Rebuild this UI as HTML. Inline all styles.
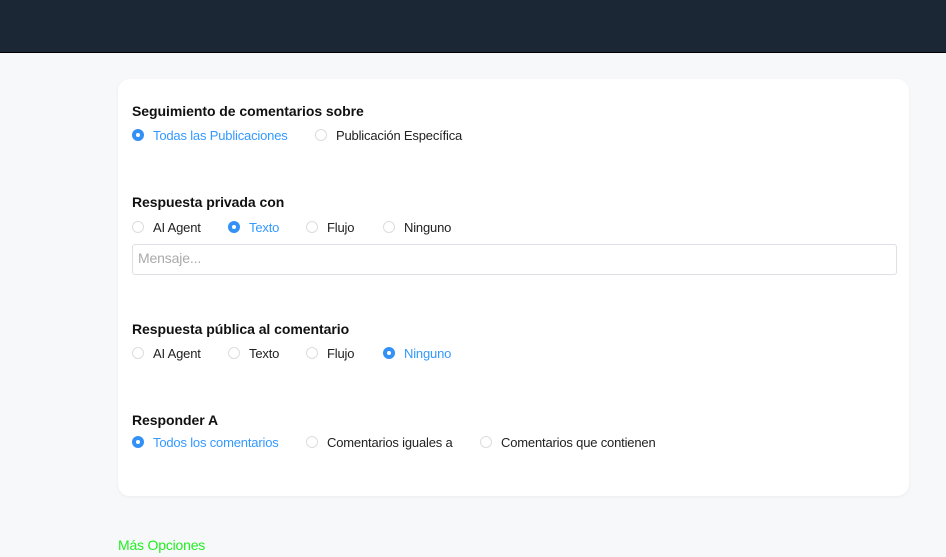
<!DOCTYPE html>
<html><head><meta charset="utf-8"><style>
*{margin:0;padding:0;box-sizing:border-box}
body{width:946px;height:557px;background:#f7f8fa;font-family:"Liberation Sans",Arial,sans-serif;position:relative;overflow:hidden}
.hd{position:absolute;left:0;top:0;width:946px;height:53px;background:#1c2735;border-bottom:1px solid #000}
.card{position:absolute;left:118px;top:79px;width:791px;height:417px;background:#fff;border-radius:12px;box-shadow:0 1px 3px rgba(0,0,0,.05)}
.lb{position:absolute;left:132px;font-size:14px;font-weight:bold;color:#111;letter-spacing:-0.05px}
.op{position:absolute;font-size:13px;color:#222;white-space:nowrap;letter-spacing:-0.18px}
.op i{position:absolute;left:-21px;top:1px;width:12px;height:12px;border:1px solid #ddd;border-radius:50%;background:#fff}
.op.on{color:#3399ff}
.op.on i{border:none;background:#3391f5}
.op.on i:after{content:"";position:absolute;left:4px;top:4px;width:4px;height:4px;border-radius:50%;background:#fff}
.in{position:absolute;left:132px;top:244px;width:765px;height:31px;border:1px solid #dde0e4;border-radius:3px;font-size:14px;color:#aaa;padding:5px 5px;letter-spacing:-0.15px}
.more{position:absolute;left:118px;top:537px;font-size:14px;color:#22ee22;letter-spacing:-0.2px}
</style></head><body>
<div class="hd"></div>
<div class="card"></div>
<div class="lb" style="top:103px">Seguimiento de comentarios sobre</div>
<div class="op on" style="left:153px;top:128px"><i></i>Todas las Publicaciones</div>
<div class="op" style="left:336px;top:128px"><i></i>Publicación Específica</div>
<div class="lb" style="top:194px">Respuesta privada con</div>
<div class="op" style="left:153px;top:220px"><i></i>AI Agent</div>
<div class="op on" style="left:249px;top:220px"><i></i>Texto</div>
<div class="op" style="left:327px;top:220px"><i></i>Flujo</div>
<div class="op" style="left:404px;top:220px"><i></i>Ninguno</div>
<div class="in">Mensaje...</div>
<div class="lb" style="top:321px">Respuesta pública al comentario</div>
<div class="op" style="left:153px;top:346px"><i></i>AI Agent</div>
<div class="op" style="left:249px;top:346px"><i></i>Texto</div>
<div class="op" style="left:327px;top:346px"><i></i>Flujo</div>
<div class="op on" style="left:404px;top:346px"><i></i>Ninguno</div>
<div class="lb" style="top:412px">Responder A</div>
<div class="op on" style="left:153px;top:435px"><i></i>Todos los comentarios</div>
<div class="op" style="left:327px;top:435px"><i></i>Comentarios iguales a</div>
<div class="op" style="left:501px;top:435px"><i></i>Comentarios que contienen</div>
<div class="more">Más Opciones</div>
</body></html>
